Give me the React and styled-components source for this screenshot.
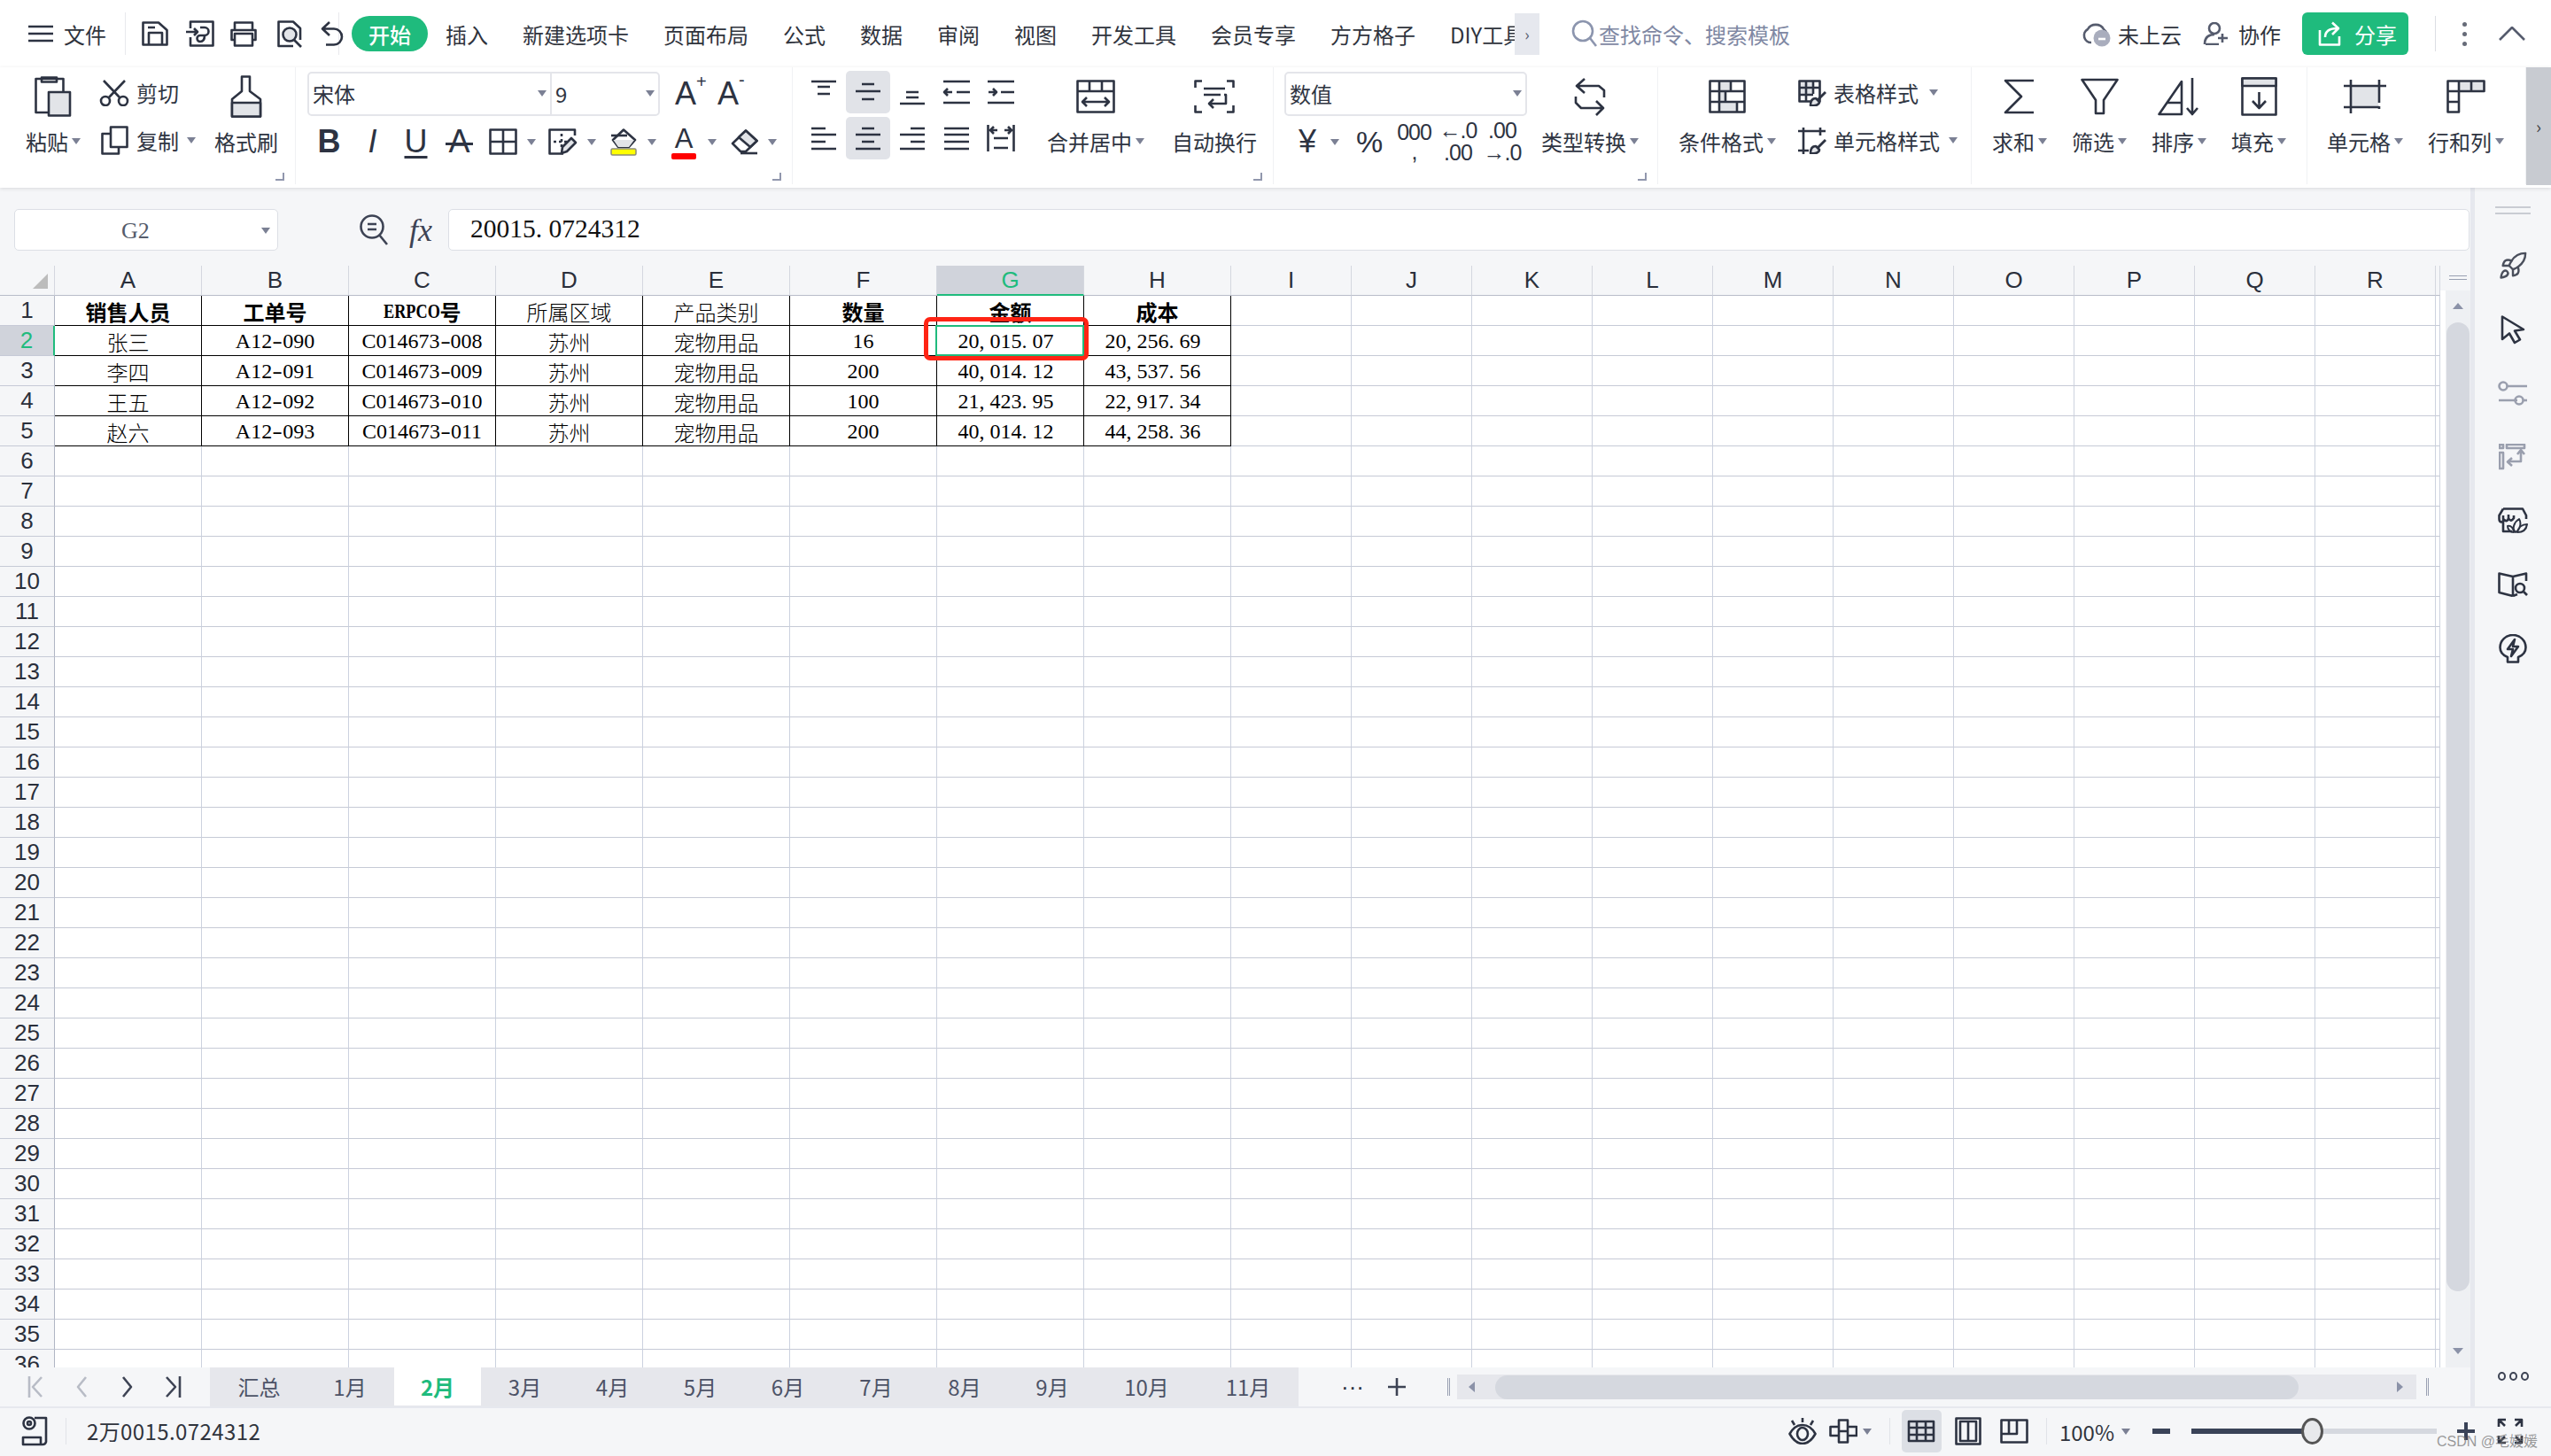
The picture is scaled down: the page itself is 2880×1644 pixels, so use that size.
import React, { Fragment } from 'react';
import styled, { createGlobalStyle } from 'styled-components';
import { Rocket } from 'lucide-react';

const GREEN = '#1fbb7d';
const INK = '#2d3342';
const SOFT = '#e2e4e8';
const PANEL = '#f5f6f8';
const LINE = '#ccd2df';
const HLINE = '#c6cad6';

const GlobalStyle = createGlobalStyle`
    html, body { margin: 0; padding: 0; background: #fff; overflow: hidden; }
    * { box-sizing: border-box; }
    body { font-family: "Noto Sans CJK SC", "Noto Sans", sans-serif; color: ${INK}; }
`;

const Shell = styled.div`
    position: relative;
    width: 2880px;
    height: 1644px;
    display: flex;
    flex-direction: column;
    overflow: hidden;
`;

/* svg drawn at real pixel size */
const Svg = styled.svg.attrs((p) => ({ width: p.$w, height: p.$h, viewBox: `0 0 ${p.$w} ${p.$h}` }))`
    flex: none;
    display: block;
    fill: none;
    stroke: ${(p) => p.$color || INK};
    stroke-width: ${(p) => p.$sw || 2.6};
    stroke-linejoin: round;
`;

/* ---------- title bar ---------- */
const TopBar = styled.div`
    height: 76px;
    flex: none;
    display: flex;
    align-items: center;
    padding: 0 29px 0 32px;
    background: #fff;
    font-size: 24px;
`;
const FileLabel = styled.span`
    margin: 0 21px 0 12px;
    color: #30343d;
`;
const QuickAccess = styled.div`
    width: 242px;
    height: 48px;
    flex: none;
    display: flex;
    align-items: center;
    padding-left: 18px;
    border-left: 1px solid #e8e9ed;
    border-right: 1px solid #e8e9ed;
`;
const QuickIcon = styled.div`
    flex: none;
    margin-left: ${(p) => p.$ml || 0}px;
`;
const Pill = styled.div`
    width: 86px;
    height: 40px;
    margin-left: 14px;
    border-radius: 20px;
    background: ${GREEN};
    color: #fff;
    font-weight: 500;
    display: flex;
    align-items: center;
    justify-content: center;
`;
const TabList = styled.div`
    width: 1207px;
    margin-left: 20px;
    display: flex;
    gap: 39px;
    overflow: hidden;
    white-space: nowrap;
    color: #30343d;
`;
const TabMore = styled.div`
    width: 28px;
    height: 47px;
    background: #e6e8ee;
    color: #555b6d;
    font-size: 18px;
    display: flex;
    align-items: center;
    justify-content: center;
`;
const SearchBox = styled.div`
    margin-left: 36px;
    display: flex;
    align-items: center;
    gap: 1px;
    color: #7f88a3;
`;
const TopRight = styled.div`
    margin-left: auto;
    display: flex;
    align-items: center;
    color: #30343d;
`;
const TopLink = styled.span`
    margin: 0 ${(p) => p.$after || 0}px 0 ${(p) => p.$before || 0}px;
`;
const ShareButton = styled.div`
    width: 120px;
    height: 48px;
    border-radius: 6px;
    background: ${GREEN};
    color: #fff;
    display: flex;
    align-items: center;
    gap: 15px;
    padding-left: 18px;
`;
const TopDivider = styled.div`
    width: 1px;
    height: 40px;
    margin: 0 30px 0 30px;
    background: #dcdee3;
`;
const Dots = styled.div`
    width: 5px;
    margin-right: 36px;
    display: flex;
    flex-direction: column;
    gap: 6px;
    span {
        width: 5px;
        height: 5px;
        border-radius: 50%;
        background: #666b78;
    }
`;

/* ---------- ribbon ---------- */
const Ribbon = styled.div`
    height: 136px;
    flex: none;
    display: flex;
    background: #fff;
    box-shadow: 0 1px 4px rgba(40, 45, 60, 0.14);
    position: relative;
    z-index: 2;
    font-size: 24px;
    color: #2f3542;
`;
const Group = styled.div`
    position: relative;
    width: ${(p) => p.$w}px;
    height: 132px;
    flex: none;
    padding: 4px 0 0 ${(p) => p.$pad || 0}px;
    border-right: 1px solid #f0f1f4;
    display: flex;
    gap: ${(p) => p.$gap || 0}px;
`;
const Launcher = styled.div`
    position: absolute;
    right: 12px;
    bottom: 4px;
    width: 10px;
    height: 9px;
    border-right: 2px solid #9197ad;
    border-bottom: 2px solid #9197ad;
`;
const Big = styled.div`
    width: ${(p) => p.$w}px;
    margin-left: ${(p) => p.$ml || 0}px;
    flex: none;
    display: flex;
    flex-direction: column;
    align-items: center;
`;
const IconSlot = styled.div`
    height: 58px;
    display: flex;
    align-items: center;
    justify-content: center;
`;
const LabelRow = styled.div`
    height: 42px;
    display: flex;
    align-items: center;
    gap: 4px;
    white-space: nowrap;
`;
const Caret = styled.i`
    display: block;
    flex: none;
    width: 0;
    height: 0;
    margin-left: ${(p) => p.$ml || 0}px;
    border-left: 5px solid transparent;
    border-right: 5px solid transparent;
    border-top: 7px solid #7b8094;
`;
const Stack = styled.div`
    width: ${(p) => p.$w}px;
    margin-left: ${(p) => p.$ml || 0}px;
    flex: none;
    display: flex;
    flex-direction: column;
    gap: 2px;
`;
const SmallRow = styled.div`
    height: 52px;
    display: flex;
    align-items: center;
    gap: ${(p) => p.$gap || 0}px;
    white-space: nowrap;
    padding-bottom: ${(p) => (p.$lift ? 3 : 0)}px;
`;
const SmallIcon = styled.div`
    width: ${(p) => p.$w}px;
    flex: none;
    display: flex;
    justify-content: center;
`;
const Combo = styled.div`
    width: ${(p) => p.$w}px;
    height: 50px;
    flex: none;
    display: flex;
    border: 2px solid #e4e5ea;
    border-radius: 5px;
`;
const ComboPart = styled.div`
    width: ${(p) => p.$w}px;
    flex: ${(p) => (p.$w ? 'none' : 1)};
    display: flex;
    align-items: center;
    justify-content: space-between;
    padding: 0 4px 2px;
    border-left: ${(p) => (p.$split ? '2px solid #e4e5ea' : 'none')};
`;
const ToolLetter = styled.span`
    position: relative;
    display: block;
    font-family: "Liberation Sans", sans-serif;
    font-size: ${(p) => p.$size || 34}px;
    font-weight: ${(p) => (p.$bold ? 700 : 400)};
    font-style: ${(p) => (p.$italic ? 'italic' : 'normal')};
    line-height: 1;
    color: ${INK};
    text-decoration: ${(p) => (p.$under ? 'underline' : 'none')};
    text-decoration-thickness: 3px;
    text-underline-offset: 4px;
`;
const Sup = styled.span`
    position: absolute;
    left: 100%;
    top: ${(p) => p.$top || -6}px;
    font-size: 20px;
`;
const StrikeBar = styled.span`
    position: absolute;
    left: -3px;
    right: -3px;
    top: 19px;
    height: 3px;
    background: ${INK};
`;
const ColorBar = styled.span`
    display: block;
    width: 28px;
    height: 7px;
    margin-top: 1px;
    border-radius: 2px;
    background: ${(p) => p.$color};
`;
const ToolCol = styled.div`
    display: flex;
    flex-direction: column;
    align-items: center;
`;
const ToolCell = styled.div`
    width: ${(p) => p.$w}px;
    height: 52px;
    flex: none;
    margin-left: ${(p) => p.$ml || 0}px;
    display: flex;
    align-items: center;
    justify-content: ${(p) => (p.$caret ? 'flex-start' : 'center')};
`;
const ToolIcon = styled.div`
    width: 50px;
    flex: none;
    display: flex;
    justify-content: center;
`;
const AlignGrid = styled.div`
    width: 250px;
    flex: none;
    display: grid;
    grid-template-columns: repeat(5, 50px);
    grid-auto-rows: 48px;
    row-gap: 4px;
`;
const AlignCell = styled.div`
    display: flex;
    align-items: center;
    justify-content: center;
    border-radius: 5px;
    background: ${(p) => (p.$on ? '#e1e3e8' : 'transparent')};
`;
const NumGlyph = styled.span`
    font-family: "Liberation Sans", sans-serif;
    font-size: ${(p) => p.$size || 26}px;
    line-height: ${(p) => p.$lh || 1};
    letter-spacing: ${(p) => p.$track || 0}px;
    color: ${INK};
    text-align: center;
    white-space: pre;
`;
const Collapse = styled.div`
    width: 28px;
    height: 133px;
    flex: none;
    background: #c8cbd1;
    color: #444;
    font-size: 20px;
    display: flex;
    align-items: center;
    justify-content: center;
`;

/* ---------- formula bar ---------- */
const Body = styled.div`
    flex: 1;
    min-height: 0;
    display: flex;
    background: ${PANEL};
`;
const Main = styled.div`
    width: 2789px;
    flex: none;
    display: flex;
    flex-direction: column;
`;
const FormulaBar = styled.div`
    height: 88px;
    flex: none;
    display: flex;
    padding: 24px 1px 17px 16px;
`;
const NameBox = styled.div`
    width: 298px;
    display: flex;
    align-items: center;
    padding: 2px 8px 0 120px;
    justify-content: space-between;
    background: #fff;
    border: 1px solid #dcdfe5;
    border-radius: 5px;
    font: 26px "Liberation Serif", serif;
    color: #555c6b;
`;
const FxSlot = styled.div`
    width: 192px;
    flex: none;
    display: flex;
    align-items: center;
    padding-left: 92px;
    gap: 23px;
`;
const FxText = styled.span`
    font: italic 36px "Liberation Serif", serif;
    color: #3d4354;
`;
const FormulaInput = styled.div`
    flex: 1;
    display: flex;
    align-items: center;
    padding: 0 0 2px 24px;
    background: #fff;
    border: 1px solid #dcdfe5;
    border-radius: 5px;
    font: 29.5px "Liberation Serif", serif;
    color: #111;
`;

/* ---------- sheet ---------- */
const SheetArea = styled.div`
    flex: 1;
    min-height: 0;
    display: flex;
`;
const Sheet = styled.div`
    width: 2755px;
    flex: none;
    overflow: hidden;
    display: grid;
    grid-template-columns: 62px repeat(8, 166px) repeat(10, 136px) 5px;
    grid-template-rows: 34px;
    grid-auto-rows: 34px;
`;
const Corner = styled.div`
    display: flex;
    align-items: flex-end;
    justify-content: flex-end;
    padding: 0 7px 7px 0;
    border-right: 1px solid #d4d7df;
    border-bottom: 1px solid #b8bcc9;
`;
const CornerMark = styled.div`
    width: 17px;
    height: 17px;
    background: #bcbcbc;
    clip-path: polygon(100% 0, 100% 100%, 0 100%);
`;
const ColHead = styled.div`
    display: flex;
    align-items: center;
    justify-content: center;
    font: 26px "Liberation Sans", sans-serif;
    color: ${(p) => (p.$on ? GREEN : '#2a2f3b')};
    background: ${(p) => (p.$on ? '#d0d3db' : PANEL)};
    border-right: 1px solid #d4d7df;
    border-bottom: ${(p) => (p.$on ? `2px solid ${GREEN}` : '1px solid #b8bcc9')};
`;
const RowHead = styled.div`
    display: flex;
    align-items: center;
    justify-content: center;
    font: 26px "Liberation Sans", sans-serif;
    color: ${(p) => (p.$on ? GREEN : '#2a2f3b')};
    background: ${(p) => (p.$on ? '#d0d3db' : PANEL)};
    border-right: ${(p) => (p.$on ? `2px solid ${GREEN}` : '1px solid #b0b5c4')};
    border-bottom: 1px solid ${HLINE};
`;
const Cell = styled.div`
    position: relative;
    display: flex;
    align-items: center;
    justify-content: center;
    padding: 2px ${(p) => p.$padR || 0}px 0 0;
    white-space: nowrap;
    font-family: "Liberation Serif", "Noto Sans CJK SC", serif;
    font-size: 24px;
    font-weight: ${(p) => (p.$bold ? 700 : 300)};
    color: #000;
    background: #fff;
    border-right: 1px solid ${(p) => (p.$table ? '#000' : LINE)};
    border-bottom: 1px solid ${(p) => (p.$table ? '#000' : HLINE)};
`;
const Slot = styled.span`
    display: inline-block;
    width: 0.5em;
    text-align: ${(p) => (p.$dash ? 'center' : 'left')};
    transform: ${(p) => (p.$dash ? 'scaleX(1.45)' : 'none')};
`;
const Condensed = styled.span`
    display: inline-block;
    width: 64px;
    transform: scaleX(0.76);
    transform-origin: left center;
`;
const Selection = styled.div`
    position: absolute;
    left: -2px;
    top: -1px;
    right: -1px;
    bottom: -1px;
    border: 2.5px solid ${GREEN};
    z-index: 3;
`;
const RedMark = styled.div`
    position: absolute;
    left: -15px;
    top: -10px;
    width: 186px;
    height: 49px;
    border: 5px solid #ff2414;
    border-radius: 7px;
    z-index: 4;
`;
const VScroll = styled.div`
    width: 34px;
    flex: none;
    padding-left: 6px;
    background: #fff;
    display: flex;
    flex-direction: column;
`;
const GripLines = styled.div`
    height: 28px;
    flex: none;
    background: ${PANEL};
    display: flex;
    flex-direction: column;
    gap: 3px;
    padding: 11px 4px 0 10px;
    margin-left: -6px;
    span {
        display: block;
        height: 1px;
        background: #99a0b2;
    }
`;
const VTrack = styled.div`
    flex: 1;
    min-height: 0;
    display: flex;
    flex-direction: column;
    align-items: center;
    background: #eef0f3;
`;
const VArrow = styled.i`
    display: block;
    width: 0;
    height: 0;
    flex: none;
    margin: ${(p) => p.$m};
    border-left: 6px solid transparent;
    border-right: 6px solid transparent;
    border-${(p) => (p.$up ? 'bottom' : 'top')}: 7px solid #8b92a8;
`;
const VThumb = styled.div`
    width: 26px;
    height: 1094px;
    flex: none;
    border-radius: 13px;
    background: #d5d8df;
`;

/* ---------- sheet tabs ---------- */
const TabsRow = styled.div`
    height: 44px;
    flex: none;
    display: flex;
    align-items: flex-start;
    background: ${PANEL};
`;
const NavButtons = styled.div`
    width: 237px;
    height: 44px;
    flex: none;
    display: grid;
    grid-template-columns: repeat(4, 51.5px);
    padding-left: 15px;
    align-items: center;
    justify-items: center;
`;
const SheetTabs = styled.div`
    width: 1229px;
    height: 44px;
    flex: none;
    display: flex;
    padding-left: 3px;
    background: #e6e7ec;
`;
const SheetTab = styled.div`
    width: ${(p) => p.$w}px;
    height: 43px;
    flex: none;
    display: flex;
    align-items: center;
    justify-content: center;
    font-size: 24px;
    font-weight: ${(p) => (p.$on ? 700 : 400)};
    color: ${(p) => (p.$on ? GREEN : '#4d5367')};
    background: ${(p) => (p.$on ? '#fff' : 'transparent')};
`;
const TabTools = styled.div`
    width: 179px;
    height: 44px;
    flex: none;
    display: flex;
    align-items: center;
    padding-left: 48px;
    gap: 26px;
`;
const HScroll = styled.div`
    flex: 1;
    height: 28px;
    margin-top: 8px;
    display: flex;
    align-items: center;
    background: #e6e7ec;
    padding-left: 13px;
`;
const HArrow = styled.i`
    display: block;
    width: 0;
    height: 0;
    flex: none;
    margin: ${(p) => p.$m};
    border-top: 6px solid transparent;
    border-bottom: 6px solid transparent;
    border-${(p) => (p.$left ? 'right' : 'left')}: 7px solid #8b92a8;
`;
const HThumb = styled.div`
    width: 907px;
    height: 27px;
    flex: none;
    border-radius: 14px;
    background: #d5d8df;
`;
const DoubleBar = styled.div`
    width: 3px;
    height: 20px;
    flex: none;
    margin: ${(p) => p.$m || '0'};
    border-left: 1px solid #99a0b2;
    border-right: 1px solid #99a0b2;
`;

/* ---------- side bar and status ---------- */
const SideGap = styled.div`
    width: 5px;
    flex: none;
    background: #e6e8ee;
`;
const SideBar = styled.div`
    flex: 1;
    display: flex;
    flex-direction: column;
    align-items: center;
    padding-top: 21px;
`;
const SideGrip = styled.div`
    width: 40px;
    height: 9px;
    margin-bottom: 22px;
    border-top: 2px solid #c9ccd3;
    border-bottom: 2px solid #c9ccd3;
`;
const SideIcon = styled.div`
    height: 72px;
    flex: none;
    display: flex;
    align-items: center;
`;
const SideDots = styled.div`
    margin-top: auto;
    margin-bottom: 29px;
    display: flex;
    gap: 4px;
    span {
        width: 9px;
        height: 10px;
        border: 2.5px solid #3d4354;
        border-radius: 50%;
    }
`;
const StatusBar = styled.div`
    height: 56px;
    flex: none;
    display: flex;
    align-items: center;
    padding: 0 7px 2px 22px;
    background: ${PANEL};
    border-top: 2px solid #e6e8ee;
    font-size: 24px;
    color: #30343d;
`;
const StatusText = styled.span`
    margin-left: 19px;
    padding-left: 23px;
    letter-spacing: 0.4px;
    border-left: 1px solid #e1e3e8;
    line-height: 30px;
`;
const StatusRight = styled.div`
    margin-left: auto;
    display: flex;
    align-items: center;
    height: 52px;
`;
const ViewButton = styled.div`
    width: ${(p) => p.$w}px;
    height: 48px;
    flex: none;
    border-radius: 5px;
    display: flex;
    align-items: center;
    justify-content: center;
    background: ${(p) => (p.$on ? '#dcdfe5' : 'transparent')};
`;
const Split = styled.div`
    width: 1px;
    height: 30px;
    flex: none;
    margin: ${(p) => p.$m};
    background: #e1e3e8;
`;
const Slider = styled.div`
    position: relative;
    width: 277px;
    height: 6px;
    flex: none;
    margin: 0 22px 0 0;
    background: #d5d8df;
`;
const SliderFill = styled.div`
    height: 100%;
    background: #3a4358;
`;
const SliderKnob = styled.div`
    position: absolute;
    top: -12px;
    width: 25px;
    height: 30px;
    margin-left: -12px;
    border-radius: 50%;
    border: 3px solid #555;
    background: #e8e9ec;
`;
const Watermark = styled.div`
    position: absolute;
    right: 15px;
    bottom: 6px;
    font: 16px "Liberation Sans", "Noto Sans CJK SC", sans-serif;
    color: rgba(110, 110, 110, 0.7);
`;

/* ---------- icons ---------- */
const LittleBrush = () => (
    <>
        <path d="M31 14 L21 24" strokeWidth="3" />
        <path d="M14 29 C14 24 16 21 20 21 L24 25 C24 28 20 30 14 29 Z" fill={SOFT} />
    </>
);
const icons = {
    menu: <Svg $w={28} $h={20}><path d="M0 2 H28 M0 10 H28 M0 18 H28" /></Svg>,
    save: <Svg $w={30} $h={28}><path d="M1.5 1.5 H19 L28.5 10 V26.5 H1.5 Z M8 26 V13 H23 V26 M7 7 H15" /></Svg>,
    open: <Svg $w={32} $h={30}><path d="M5 9 V1.5 H30.5 V28.5 H5 V19 M0 13 H13 M9 9 L13 13 L9 17 M16 8 H21 A4.5 4.5 0 0 1 21 17 H16 A3.5 3.5 0 0 0 16 24 C20 24 21 21 21 17" /></Svg>,
    print: <Svg $w={30} $h={29}><path d="M5 10 V1.5 H25 V10 M5 21 H1.5 V10 H28.5 V21 H25" /><rect x="5" y="14" width="20" height="13.5" /></Svg>,
    preview: <Svg $w={28} $h={31}><path d="M18 29 H1.5 V1.5 H18 L26 9 V22" /><circle cx="14" cy="16" r="7.5" fill={SOFT} /><path d="M19 22 L27 30" /></Svg>,
    undo: <Svg $w={26} $h={28}><path d="M10 1 L2 8.5 L10 16 M2 8.5 H15 A9 9 0 0 1 15 26.5 H6" /></Svg>,
    search: <Svg $w={30} $h={32} $color="#8c95ae"><circle cx="13" cy="13" r="11" /><path d="M21 21 L28 30" /></Svg>,
    cloud: <Svg $w={32} $h={29} $color="#555b6d"><path d="M10 24 A8 8 0 0 1 6 9 A10 9 0 0 1 24 9 A7 7 0 0 1 27 14" /><circle cx="22" cy="19" r="9.5" fill="#a9adbd" stroke="none" /><path d="M18 20 H26" stroke="#fff" /></Svg>,
    people: <Svg $w={29} $h={26} $color="#555b6d"><circle cx="13" cy="7" r="6" /><path d="M2 25 C2 16 8 14 13 14 M3 25 H18 M22 13 V23 M17 18 H28" /></Svg>,
    share: <Svg $w={26} $h={28} $color="#fff"><path d="M2 10 V26.5 H24 V17 M8 18 C8 11 13 8 22 8 M16 1.5 L23 8 L16 15" /></Svg>,
    up: <Svg $w={30} $h={16} $color="#555b6d"><path d="M1 15 L15 1 L29 15" /></Svg>,
    paste: <Svg $w={42} $h={46}><rect x="1.5" y="3" width="31" height="38" /><rect x="8" y="1.5" width="17" height="5" /><rect x="16" y="18" width="24" height="26.5" fill={SOFT} /></Svg>,
    cut: <Svg $w={34} $h={30}><path d="M5 1 L23 20 M29 1 L11 20" /><circle cx="7" cy="24" r="5" /><circle cx="27" cy="24" r="5" /></Svg>,
    copy: <Svg $w={31} $h={33}><rect x="11" y="1.5" width="18.5" height="22.5" /><path d="M11 9 H1.5 V31.5 H20 V24" /></Svg>,
    brush: <Svg $w={36} $h={48}><path d="M13 1.5 H22 V18 L34 27 V46.5 H2 V27 L13 18 Z" /><path d="M2 31 H34 V46.5 H2 Z" fill={SOFT} /></Svg>,
    borders: <Svg $w={32} $h={30}><rect x="1.5" y="1.5" width="29" height="27" /><path d="M16 1.5 V28.5 M1.5 15 H30.5" /></Svg>,
    pageSetup: <Svg $w={34} $h={30}><path d="M30 8 V1.5 H1.5 V28.5 H17" /><path d="M15 6 V24 M6 15 H24" strokeDasharray="3 3" /><path d="M15 28 L16 21 L26 11 L31 16 L21 26 Z" fill={SOFT} /></Svg>,
    fillColor: <Svg $w={30} $h={31}><path d="M15 1.5 L28 13 L21 21 H9 L3 13 Z" /><path d="M3.5 13 H27 L21 21 H9 Z" fill={SOFT} stroke="none" /><path d="M1 8 H19" /><rect x="1" y="23" width="28" height="7" rx="1.5" fill="#ffff00" stroke="#8c8c7a" strokeWidth="1.5" /></Svg>,
    eraser: <Svg $w={31} $h={29}><path d="M2 16 L17 1.5 L29.5 13 L17 25 H11 Z" /><path d="M9 9 L17 1.5 L29.5 13 L22 20 Z" fill={SOFT} /><path d="M11 27 H30" /></Svg>,
    merge: <Svg $w={44} $h={38}><rect x="1.5" y="1.5" width="41" height="35" /><path d="M1.5 13 H42.5 M15 1.5 V13 M29 1.5 V13 M7 25 H37 M12 20 L7 25 L12 30 M32 20 L37 25 L32 30" /></Svg>,
    wrap: <Svg $w={46} $h={38}><path d="M9 1.5 H1.5 V9 M37 1.5 H44.5 V9 M1.5 29 V36.5 H9 M44.5 29 V36.5 H37 M11 10 H35 M11 17 H30 M34 17 H36 V27 H17 M22 22 L17 27 L22 32" /></Svg>,
    convert: <Svg $w={38} $h={43}><path d="M13 1 L4 9 L13 17 M4 9 H29 L35 14 V22 M3 21 V28 L9 34 H34 M26 26 L34 34 L26 42" /></Svg>,
    condFormat: <Svg $w={42} $h={38}><path d="M12 2 H25 V13 H19 V25 H32 V36 H12 Z" fill={SOFT} stroke="none" /><rect x="1.5" y="1.5" width="39" height="35" /><path d="M1.5 13 H40.5 M1.5 25 H40.5 M12 1.5 V36.5 M25 1.5 V13 M19 13 V25 M32 25 V36.5" /></Svg>,
    tableStyle: <Svg $w={32} $h={30}><path d="M2 2 H17 V17 H2 Z" fill={SOFT} stroke="none" /><rect x="1.5" y="1.5" width="23" height="23" /><path d="M9 1.5 V24.5 M17 1.5 V16 M1.5 9 H24.5 M1.5 17 H17" /><LittleBrush /></Svg>,
    cellStyle: <Svg $w={32} $h={30}><path d="M0 4 H31 M6 0 V30 M25 0 V9 M0 26 H12" /><LittleBrush /></Svg>,
    sum: <Svg $w={36} $h={40}><path d="M34 2 H2 L20 20 L2 38 H34" /></Svg>,
    filter: <Svg $w={43} $h={42}><path d="M1.5 2 H41.5 L26 25 V40 H17 V25 Z" /></Svg>,
    sort: <Svg $w={48} $h={43}><path d="M1.5 41 L27 4 V41 Z M10 28 H27 M39 0 V41 M33 34 L39 41 L45 34" /></Svg>,
    fillDown: <Svg $w={41} $h={44}><rect x="1.5" y="1.5" width="38" height="41" /><path d="M1.5 10 H39.5 V1.5 H1.5 Z" fill={SOFT} /><path d="M20.5 17 V35 M13 27 L20.5 35 L28 27" /></Svg>,
    cell: <Svg $w={48} $h={38}><rect x="9" y="7" width="30" height="24" fill={SOFT} stroke="none" /><path d="M0 7 H48 M0 31 H40 M8 0 V38 M40 0 V26 M40 30 V33" /></Svg>,
    rowCol: <Svg $w={44} $h={38}><path d="M14 2 H43 V13 H14 Z" fill={SOFT} stroke="none" /><path d="M1.5 1.5 H42.5 V13 H14 V36.5 H1.5 Z M1.5 13 H14 M14 1.5 V13 M28 1.5 V13 M1.5 25 H14" /></Svg>,
    formulaSearch: <Svg $w={33} $h={35} $color="#3d4354"><circle cx="14" cy="14" r="12.5" /><path d="M22 23 L31 34 M9 11 H19 M9 17 H19" /></Svg>,
    pointer: <Svg $w={28} $h={33}><path d="M2 1.5 L2 27 L10 20.5 L16 31 L22 27.5 L16 17.5 L26 16 Z" /></Svg>,
    sliders: <Svg $w={34} $h={28} $color="#9a9fae"><circle cx="6" cy="6" r="4.5" /><path d="M11 6 H33 M1 22 H22" /><circle cx="24" cy="22" r="4.5" /><path d="M29 22 H33" /></Svg>,
    swap: <Svg $w={32} $h={30} $color="#9a9fae"><rect x="1" y="1" width="4" height="4" /><rect x="9" y="1" width="20" height="4" /><rect x="1" y="10" width="4" height="18" /><path d="M25 8 V20 H11 M21 12 L25 7 L29 12 M15 16 L10 20.5 L15 25" /></Svg>,
    store: <Svg $w={34} $h={30}><path d="M6 1.5 H28 L32 9 V13 M6 1.5 L1.5 9 V13 C1.5 17 6 18 6 14 V27 H16 M6 9 V13 C9 16 11 16 12 12 V8 M12 12 C14 16 16 15 18 12 V9" /><path d="M20 28 C15 24 19 16 24 13 C27 18 25 25 20 28 Z M22 28 C28 28 32 26 33 19 C27 19 23 23 22 28 Z M18 28 C14 28 11 25 11 21 C15 20 18 24 18 28 Z" strokeWidth="2" /></Svg>,
    book: <Svg $w={34} $h={28}><path d="M17 27 L1.5 23 V1.5 L17 5 L32 1.5 V10 M17 5 V27 M17 27 L22 25" /><circle cx="25" cy="18" r="5" /><path d="M29 22 L33 26" /></Svg>,
    bulb: <Svg $w={32} $h={33}><path d="M10 26 C5 24 1.5 20 1.5 15 A14.5 14 0 0 1 30.5 15 C30.5 20 27 24 22 26 V31.5 H10 Z" /><path d="M18 6 L10 17 H16 L14 25 L22 14 H16 Z" /></Svg>,
    first: <Svg $w={19} $h={24} $color="#b8bcc6"><path d="M2 0 V24 M16 1 L6 12 L16 23" /></Svg>,
    prev: <Svg $w={13} $h={24} $color="#b8bcc6"><path d="M11 1 L2 12 L11 23" /></Svg>,
    next: <Svg $w={13} $h={24} $color="#3d4354"><path d="M2 1 L11 12 L2 23" /></Svg>,
    last: <Svg $w={19} $h={24} $color="#3d4354"><path d="M2 1 L12 12 L2 23 M17 0 V24" /></Svg>,
    plus: <Svg $w={22} $h={22} $color="#3d4354"><path d="M11 1 V21 M1 11 H21" /></Svg>,
    macro: <Svg $w={33} $h={34}><circle cx="11" cy="8" r="6.5" /><circle cx="11" cy="8" r="2" /><path d="M17 2 H30 V29 A4 4 0 0 1 26 32 H4 V24 H24 V32" /></Svg>,
    eye: <Svg $w={32} $h={30}><path d="M1.5 18 C6 10 11 8 16 8 C21 8 26 10 30.5 18 C26 26 21 29 16 29 C11 29 6 26 1.5 18 Z" /><ellipse cx="16" cy="18" rx="6" ry="7" /><path d="M16 0 V5 M4 3 L7 8 M28 3 L25 8" /></Svg>,
    crossView: <Svg $w={32} $h={28}><path d="M11 1.5 H21 V9 H31 V19 H21 V26.5 H11 V19 H1.5 V9 H11 Z M11 9 V19 M21 9 V19 M11 14 H21" /></Svg>,
    gridView: <Svg $w={32} $h={26} $color="#2d3342"><path d="M2 2 H30 V24 H2 Z" fill="#dcdfe5" /><path d="M11 2 V24 M21 2 V24 M2 9 H30 M2 17 H30" /></Svg>,
    pageView: <Svg $w={30} $h={32}><rect x="1.5" y="1.5" width="27" height="29" /><rect x="6" y="5" width="18" height="22" /><path d="M15 5 V27" /></Svg>,
    breakView: <Svg $w={32} $h={28}><rect x="1.5" y="1.5" width="29" height="25" /><path d="M1.5 17 H19 V1.5 M10 1.5 V17" /></Svg>,
    minus: <Svg $w={20} $h={6} $color="#3a4358" $sw={6}><path d="M0 3 H20" /></Svg>,
    zoomIn: <Svg $w={22} $h={22} $color="#3a4358" $sw={4}><path d="M11 1 V21 M1 11 H21" /></Svg>,
    full: <Svg $w={30} $h={30}><path d="M2 10 V2 H10 M2 2 L9 9 M28 10 V2 H20 M28 2 L21 9 M2 20 V28 H10 M2 28 L9 21 M28 20 V28 H20 M28 28 L21 21" /></Svg>,
};

const alignRows = [
    [[[2, 30, 4], [9, 23, 10], [9, 23, 18]]],
    [[[9, 23, 7], [2, 30, 15], [9, 23, 24]]],
    [[[9, 23, 16], [9, 23, 22], [2, 30, 29]]],
    [[[1, 31, 4], [16, 31, 16], [1, 31, 28]], 'M11 16 H2 M6 12 L2 16 L6 20'],
    [[[1, 31, 4], [16, 31, 16], [1, 31, 28]], 'M2 16 H11 M7 12 L11 16 L7 20'],
    [[[2, 18, 5], [2, 30, 12], [2, 18, 20], [2, 30, 28]]],
    [[[9, 23, 5], [2, 30, 12], [9, 23, 20], [2, 30, 28]]],
    [[[14, 30, 5], [2, 30, 12], [14, 30, 20], [2, 30, 28]]],
    [[[2, 30, 5], [2, 30, 12], [2, 30, 20], [2, 30, 28]]],
    [[[8, 24, 16], [8, 24, 27]], 'M1.5 1 V31 M30.5 1 V31 M12 7 H5 M8 3 L4 7 L8 11 M20 7 H27 M24 3 L28 7 L24 11'],
];
const AlignIcon = ({ spec }) => (
    <Svg $w={32} $h={32}>
        <path d={spec[0].map(([a, b, y]) => `M${a} ${y} H${b}`).join(' ') + ' ' + (spec[1] || '')} />
    </Svg>
);

/* ---------- data ---------- */
const columns = 'ABCDEFGHIJKLMNOPQR'.split('');
const header = [
    ['销售人员', true],
    ['工单号', true],
    ['ERPCO号', true],
    ['所属区域', false],
    ['产品类别', false],
    ['数量', true],
    ['金额', true],
    ['成本', true],
];
const rows = [
    ['张三', 'A12-090', 'C014673-008', '苏州', '宠物用品', '16', '20,015.07', '20,256.69'],
    ['李四', 'A12-091', 'C014673-009', '苏州', '宠物用品', '200', '40,014.12', '43,537.56'],
    ['王五', 'A12-092', 'C014673-010', '苏州', '宠物用品', '100', '21,423.95', '22,917.34'],
    ['赵六', 'A12-093', 'C014673-011', '苏州', '宠物用品', '200', '40,014.12', '44,258.36'],
];
const menuTabs = ['插入', '新建选项卡', '页面布局', '公式', '数据', '审阅', '视图', '开发工具', '会员专享', '方方格子', 'DIY工具'];
const sheets = [
    ['汇总', 105], ['1月', 100], ['2月', 98], ['3月', 99], ['4月', 99], ['5月', 99], ['6月', 99],
    ['7月', 100], ['8月', 100], ['9月', 98], ['10月', 115], ['11月', 114],
];

// SimSun punctuation sits in a half-width slot, so give it one
const Fixed = ({ text }) =>
    text.split(/([,.\-])/).map((part, i) =>
        /^[,.\-]$/.test(part)
            ? <Slot key={i} $dash={part === '-'}>{part}</Slot>
            : <Fragment key={i}>{part}</Fragment>
    );

const BigButton = ({ icon, label, w, ml, caret = true }) => (
    <Big $w={w} $ml={ml}>
        <IconSlot>{icons[icon]}</IconSlot>
        <LabelRow>
            {label}
            {caret && <Caret />}
        </LabelRow>
    </Big>
);

const CaretTool = ({ children }) => (
    <ToolCell $w={68} $caret>
        <ToolIcon>{children}</ToolIcon>
        <Caret $ml={2} />
    </ToolCell>
);

const Grid = () => (
    <Sheet>
        <Corner><CornerMark /></Corner>
        {columns.map((c) => <ColHead key={c} $on={c === 'G'}>{c}</ColHead>)}
        <ColHead />
        {Array.from({ length: 36 }, (_, i) => {
            const n = i + 1;
            return (
                <Fragment key={n}>
                    <RowHead $on={n === 2}>{n}</RowHead>
                    {columns.map((c, ci) => {
                        if (ci < 8 && n === 1) {
                            const [label, bold] = header[ci];
                            return (
                                <Cell key={c} $table $bold={bold}>
                                    {ci === 2 ? <><Condensed>ERPCO</Condensed>号</> : label}
                                </Cell>
                            );
                        }
                        if (ci < 8 && n <= 5) {
                            const selected = n === 2 && ci === 6;
                            return (
                                <Cell key={c} $table $padR={ci >= 6 ? 10 : 0}>
                                    <Fixed text={rows[n - 2][ci]} />
                                    {selected && <><Selection /><RedMark /></>}
                                </Cell>
                            );
                        }
                        return <Cell key={c} />;
                    })}
                    <Cell />
                </Fragment>
            );
        })}
    </Sheet>
);

export default function App() {
    return (
        <Shell>
            <GlobalStyle />
            <TopBar>
                {icons.menu}
                <FileLabel>文件</FileLabel>
                <QuickAccess>
                    <QuickIcon>{icons.save}</QuickIcon>
                    <QuickIcon $ml={20}>{icons.open}</QuickIcon>
                    <QuickIcon $ml={18}>{icons.print}</QuickIcon>
                    <QuickIcon $ml={23}>{icons.preview}</QuickIcon>
                    <QuickIcon $ml={21}>{icons.undo}</QuickIcon>
                </QuickAccess>
                <Pill>开始</Pill>
                <TabList>
                    {menuTabs.map((t) => <span key={t}>{t}</span>)}
                </TabList>
                <TabMore>›</TabMore>
                <SearchBox>
                    {icons.search}
                    查找命令、搜索模板
                </SearchBox>
                <TopRight>
                    {icons.cloud}
                    <TopLink $before={8} $after={24}>未上云</TopLink>
                    {icons.people}
                    <TopLink $before={11} $after={24}>协作</TopLink>
                    <ShareButton>{icons.share}分享</ShareButton>
                    <TopDivider />
                    <Dots><span /><span /><span /></Dots>
                    {icons.up}
                </TopRight>
            </TopBar>

            <Ribbon>
                <Group $w={334} $pad={10}>
                    <BigButton icon="paste" label="粘贴" w={100} />
                    <Stack $w={120} $ml={2}>
                        <SmallRow $gap={8} $lift><SmallIcon $w={34}>{icons.cut}</SmallIcon>剪切</SmallRow>
                        <SmallRow $gap={8} $lift><SmallIcon $w={34}>{icons.copy}</SmallIcon>复制<Caret $ml={1} /></SmallRow>
                    </Stack>
                    <BigButton icon="brush" label="格式刷" w={84} ml={4} caret={false} />
                    <Launcher />
                </Group>

                <Group $w={561} $pad={13}>
                    <Stack $w={540}>
                        <SmallRow>
                            <Combo $w={398}>
                                <ComboPart>宋体<Caret /></ComboPart>
                                <ComboPart $w={122} $split>9<Caret /></ComboPart>
                            </Combo>
                            <ToolCell $w={48} $ml={5}><ToolLetter $size={36}>A<Sup>+</Sup></ToolLetter></ToolCell>
                            <ToolCell $w={48}><ToolLetter $size={36}>A<Sup $top={-8}>-</Sup></ToolLetter></ToolCell>
                        </SmallRow>
                        <SmallRow>
                            <ToolCell $w={49}><ToolLetter $bold $size={36}>B</ToolLetter></ToolCell>
                            <ToolCell $w={49}><ToolLetter $italic $size={36}>I</ToolLetter></ToolCell>
                            <ToolCell $w={49}><ToolLetter $under $size={36}>U</ToolLetter></ToolCell>
                            <ToolCell $w={49}><ToolLetter $size={36}>A<StrikeBar /></ToolLetter></ToolCell>
                            <CaretTool>{icons.borders}</CaretTool>
                            <CaretTool>{icons.pageSetup}</CaretTool>
                            <CaretTool>{icons.fillColor}</CaretTool>
                            <CaretTool>
                                <ToolCol>
                                    <ToolLetter $size={31}>A</ToolLetter>
                                    <ColorBar $color="#ff0000" />
                                </ToolCol>
                            </CaretTool>
                            <CaretTool>{icons.eraser}</CaretTool>
                        </SmallRow>
                    </Stack>
                    <Launcher />
                </Group>

                <Group $w={543} $pad={10}>
                    <AlignGrid>
                        {alignRows.map((spec, i) => (
                            <AlignCell key={i} $on={i === 1 || i === 6}>
                                <AlignIcon spec={spec} />
                            </AlignCell>
                        ))}
                    </AlignGrid>
                    <BigButton icon="merge" label="合并居中" w={112} ml={26} />
                    <BigButton icon="wrap" label="自动换行" w={96} ml={30} caret={false} />
                    <Launcher />
                </Group>

                <Group $w={434} $pad={12}>
                    <Stack $w={274}>
                        <SmallRow>
                            <Combo $w={274}>
                                <ComboPart>数值<Caret /></ComboPart>
                            </Combo>
                        </SmallRow>
                        <SmallRow>
                            <ToolCell $w={70} $caret>
                                <ToolCell $w={52}><NumGlyph $size={36}>¥</NumGlyph></ToolCell>
                                <Caret />
                            </ToolCell>
                            <ToolCell $w={52}><NumGlyph $size={34}>%</NumGlyph></ToolCell>
                            <ToolCell $w={49}><NumGlyph $size={25} $lh={0.9} $track={-1}>000{'\n'},</NumGlyph></ToolCell>
                            <ToolCell $w={50}><NumGlyph $size={25} $lh={1} $track={-1}>←.0{'\n'}.00</NumGlyph></ToolCell>
                            <ToolCell $w={50}><NumGlyph $size={25} $lh={1} $track={-1}>.00{'\n'}→.0</NumGlyph></ToolCell>
                        </SmallRow>
                    </Stack>
                    <BigButton icon="convert" label="类型转换" w={116} ml={13} />
                    <Launcher />
                </Group>

                <Group $w={354} $pad={20}>
                    <BigButton icon="condFormat" label="条件格式" w={116} />
                    <Stack $w={190} $ml={22}>
                        <SmallRow $gap={8} $lift><SmallIcon $w={32}>{icons.tableStyle}</SmallIcon>表格样式<Caret $ml={4} /></SmallRow>
                        <SmallRow $gap={8} $lift><SmallIcon $w={32}>{icons.cellStyle}</SmallIcon>单元格样式<Caret $ml={2} /></SmallRow>
                    </Stack>
                </Group>

                <Group $w={379} $pad={22} $gap={26}>
                    <BigButton icon="sum" label="求和" w={64} />
                    <BigButton icon="filter" label="筛选" w={64} />
                    <BigButton icon="sort" label="排序" w={64} />
                    <BigButton icon="fillDown" label="填充" w={64} />
                </Group>

                <Group $w={247} $pad={21} $gap={26}>
                    <BigButton icon="cell" label="单元格" w={88} />
                    <BigButton icon="rowCol" label="行和列" w={88} />
                </Group>
                <Collapse>›</Collapse>
            </Ribbon>

            <Body>
                <Main>
                    <FormulaBar>
                        <NameBox>G2<Caret /></NameBox>
                        <FxSlot>
                            {icons.formulaSearch}
                            <FxText>fx</FxText>
                        </FxSlot>
                        <FormulaInput><Fixed text="20015.0724312" /></FormulaInput>
                    </FormulaBar>
                    <SheetArea>
                        <Grid />
                        <VScroll>
                            <GripLines><span /><span /></GripLines>
                            <VTrack>
                                <VArrow $up $m="14px 0 15px" />
                                <VThumb />
                                <VArrow $m="auto 0 15px" />
                            </VTrack>
                        </VScroll>
                    </SheetArea>
                    <TabsRow>
                        <NavButtons>
                            {icons.first}
                            {icons.prev}
                            {icons.next}
                            {icons.last}
                        </NavButtons>
                        <SheetTabs>
                            {sheets.map(([name, w]) => (
                                <SheetTab key={name} $w={w} $on={name === '2月'}>{name}</SheetTab>
                            ))}
                        </SheetTabs>
                        <TabTools>
                            <NumGlyph $size={26}>···</NumGlyph>
                            {icons.plus}
                            <DoubleBar $m="0 0 0 20px" />
                        </TabTools>
                        <HScroll>
                            <HArrow $left $m="0 23px 0 0" />
                            <HThumb />
                            <HArrow $m="0 0 0 111px" />
                        </HScroll>
                        <DoubleBar $m="12px 47px 0 11px" />
                    </TabsRow>
                </Main>
                <SideGap />
                <SideBar>
                    <SideGrip />
                    <SideIcon><Rocket size={34} color="#4a4f5c" strokeWidth={1.7} /></SideIcon>
                    <SideIcon>{icons.pointer}</SideIcon>
                    <SideIcon>{icons.sliders}</SideIcon>
                    <SideIcon>{icons.swap}</SideIcon>
                    <SideIcon>{icons.store}</SideIcon>
                    <SideIcon>{icons.book}</SideIcon>
                    <SideIcon>{icons.bulb}</SideIcon>
                    <SideDots><span /><span /><span /></SideDots>
                </SideBar>
            </Body>

            <StatusBar>
                {icons.macro}
                <StatusText>2万0015.0724312</StatusText>
                <StatusRight>
                    {icons.eye}
                    <SmallIcon $w={60}>{icons.crossView}</SmallIcon>
                    <Caret $ml={-8} />
                    <Split $m="0 13px 0 20px" />
                    <ViewButton $w={45} $on>{icons.gridView}</ViewButton>
                    <ViewButton $w={60}>{icons.pageView}</ViewButton>
                    <ViewButton $w={44}>{icons.breakView}</ViewButton>
                    <Split $m="0 14px 0 14px" />
                    100%
                    <Caret $ml={8} />
                    <SmallIcon $w={69}>{icons.minus}</SmallIcon>
                    <Slider>
                        <SliderFill style={{ width: '49%' }} />
                        <SliderKnob style={{ left: '49%' }} />
                    </Slider>
                    {icons.zoomIn}
                    <SmallIcon $w={78}>{icons.full}</SmallIcon>
                </StatusRight>
            </StatusBar>
            <Watermark>CSDN @毛媛媛</Watermark>
        </Shell>
    );
}
